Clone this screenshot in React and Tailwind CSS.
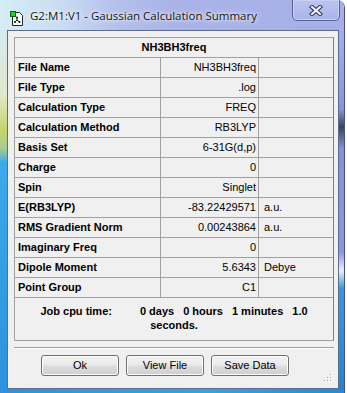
const rows = [
  ["File Name", "NH3BH3freq", ""],
  ["File Type", ".log", ""],
  ["Calculation Type", "FREQ", ""],
  ["Calculation Method", "RB3LYP", ""],
  ["Basis Set", "6-31G(d,p)", ""],
  ["Charge", "0", ""],
  ["Spin", "Singlet", ""],
  ["E(RB3LYP)", "-83.22429571", "a.u."],
  ["RMS Gradient Norm", "0.00243864", "a.u."],
  ["Imaginary Freq", "0", ""],
  ["Dipole Moment", "5.6343", "Debye"],
  ["Point Group", "C1", ""],
];

const AppIcon = () => (
  <svg width="15" height="16" viewBox="0 0 15 16" className="ml-[10px] mt-[11px] shrink-0">
    <path d="M2.5 1.5h7l3 3v10h-10z" fill="#fff" stroke="#222" />
    <circle cx="7" cy="6.5" r="1" fill="#111" />
    <circle cx="5" cy="11" r="1" fill="#111" />
    <circle cx="9.5" cy="11" r="1" fill="#111" />
    <path d="M7 6.5v2.5M7 9l-2 2M7 9l2.5 2" stroke="#111" strokeWidth="1" fill="none" />
    <rect x="0.5" y="0.5" width="5" height="5" fill="#22d11e" stroke="#0a6a0a" />
  </svg>
);

const CloseGlyph = () => (
  <svg width="14" height="11" viewBox="0 0 14 11">
    <path d="M3 2l8 7M11 2l-8 7" stroke="#2e3450" strokeWidth="4.2" strokeLinecap="square" />
    <path d="M3 2l8 7M11 2l-8 7" stroke="#f4f4f8" strokeWidth="2.2" strokeLinecap="square" />
  </svg>
);

const Grip = () => (
  <svg width="9" height="9" viewBox="0 0 9 9" className="absolute right-[6px] bottom-[6px]">
    {[[7, 1], [7, 4], [4, 4], [7, 7], [4, 7], [1, 7]].map(([x, y], i) => (
      <g key={i}>
        <rect x={x + 1} y={y + 1} width="1" height="1" fill="#fff" />
        <rect x={x} y={y} width="1" height="1" fill="#a0a0a0" />
      </g>
    ))}
  </svg>
);

const WinButton = ({ children }) => (
  <button className="w-[78px] h-[21px] rounded-[3px] border border-[#707070] bg-[linear-gradient(to_bottom,#f2f2f2_0%,#ebebeb_48%,#dddddd_52%,#cfcfcf_100%)] shadow-[inset_0_0_0_1px_#fcfcfc] text-[11px] text-black leading-none flex items-center justify-center">
    {children}
  </button>
);

export default function App() {
  return (
    <div className="w-[347px] h-[393px] bg-white font-['Liberation_Sans',Arial,sans-serif]">
      <div className="w-[345px] h-[393px] flex flex-col rounded-tr-[8px] overflow-hidden border-r border-[#4a5274]">
        {/* title bar */}
        <div className="h-[30px] shrink-0 flex items-start bg-[linear-gradient(to_right,#d6eef6_0%,#c8dcf2_18%,#b4c0ec_34%,#a9b3e8_50%,#a6b0e7_100%)]">
          <AppIcon />
          <span className="ml-[5px] mt-[8px] text-[11.5px] leading-[16px] text-[#111] font-['Open_Sans','Noto_Sans',sans-serif] whitespace-nowrap [text-shadow:0_0_6px_#fff,0_0_3px_#fff]">
            G2:M1:V1 - Gaussian Calculation Summary
          </span>
          <div className="ml-auto mr-[4px] -mt-px w-[48px] h-[22px] rounded-b-[5px] border border-[#5a6296] bg-[linear-gradient(to_bottom,#bcc4f0,#aab4ea)] shadow-[inset_0_0_0_1px_#c8cff4] flex items-center justify-center">
            <CloseGlyph />
          </div>
        </div>

        <div className="flex-1 flex">
          <div className="w-[7px] bg-[linear-gradient(to_bottom,#d4eaf2_0%,#e2e8cc_18%,#c4d468_28%,#a8cc90_33%,#3ea8e8_37%,#2e92dc_100%)]" />

          {/* client area */}
          <div className="flex-1 relative bg-[#f0f0f0] border border-[#5b6c8c] pl-[6px] pr-[4px] pt-[6px] flex flex-col">
            <div className="border border-[#a0a0a0] border-r-[#7c7c7c] text-[11px] text-black">
              <div className="h-[20px] border-b border-[#a0a0a0] flex items-center justify-center font-bold">
                NH3BH3freq
              </div>
              {rows.map(([label, value, unit]) => (
                <div key={label} className="grid grid-cols-[146px_98px_1fr] h-[20px] border-b border-[#a0a0a0]">
                  <div className="border-r border-[#a0a0a0] pl-[3px] flex items-center font-bold whitespace-nowrap">{label}</div>
                  <div className="border-r border-[#a0a0a0] pr-[2px] flex items-center justify-end">{value}</div>
                  <div className="pl-[5px] flex items-center">{unit}</div>
                </div>
              ))}
              <div className="h-[42px] pt-[6px] font-bold leading-[14px]">
                <div className="flex justify-center gap-[9px] whitespace-nowrap">
                  <span className="mr-[19px]">Job cpu time:</span>
                  <span>0 days</span>
                  <span>0 hours</span>
                  <span>1 minutes</span>
                  <span>1.0</span>
                </div>
                <div className="text-center">seconds.</div>
              </div>
            </div>

            <div className="mt-[6px] border-t border-[#a0a0a0] border-b border-b-white" />

            <div className="mt-[6px] ml-[27px] flex gap-[7px]">
              <WinButton>Ok</WinButton>
              <WinButton>View File</WinButton>
              <WinButton>Save Data</WinButton>
            </div>

            <Grip />
          </div>

          <div className="w-[5px] bg-[linear-gradient(to_bottom,#a4aee6_0%,#8a94dc_22%,#3c4458_27%,#8890da_33%,#8c96de_62%,#e8f0fa_67%,#3a96dc_72%,#2684d4_100%)]" />
        </div>

        <div className="h-[4px] shrink-0 bg-[linear-gradient(to_right,#2e92dc,#3aa0e4_60%,#2a88d6)]" />
      </div>
    </div>
  );
}
